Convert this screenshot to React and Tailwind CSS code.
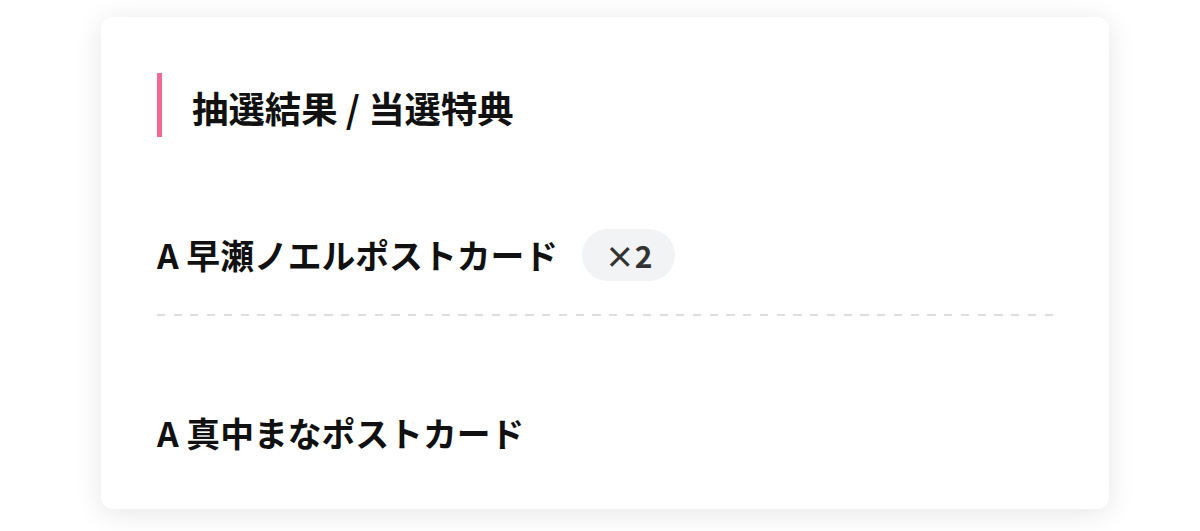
export default function App() {
  const font = { fontFamily: '"Noto Sans CJK JP", "Noto Sans", sans-serif' };
  return (
    <div className="min-h-[531px] w-[1200px] bg-white pl-[101px] pr-[91px] pt-[17px]" style={font}>
      <div className="h-[492px] rounded-[12px] bg-white pl-[56px] pr-[56px] pt-[56px] shadow-[0_4px_28px_rgba(0,0,0,0.10)]">
        {/* section heading with accent bar */}
        <div className="flex h-[64px] items-center">
          <div className="h-[64px] w-[5px] bg-[#f26a91]" />
          <h2 className="ml-[30px] mt-[4px] text-[36.4px] font-bold leading-none text-[#111]">抽選結果 / 当選特典</h2>
        </div>

        {/* prize rows */}
        <div className="mt-[92px] flex items-center">
          <span className="text-[33.8px] font-bold leading-none text-[#111]">A 早瀬ノエルポストカード</span>
          <span className="ml-[24px] flex h-[52px] w-[93px] items-center justify-center rounded-full bg-[#f1f3f5] text-[30px] font-bold leading-none text-[#333]">
            ×2
          </span>
        </div>

        <div className="mt-[33px] h-[2px] w-[896px] bg-[repeating-linear-gradient(to_right,#dddddd_0_8px,transparent_8px_16.75px)]" />

        <div className="mt-[100px] flex items-center">
          <span className="text-[33.8px] font-bold leading-none text-[#111]">A 真中まなポストカード</span>
        </div>
      </div>
    </div>
  );
}
